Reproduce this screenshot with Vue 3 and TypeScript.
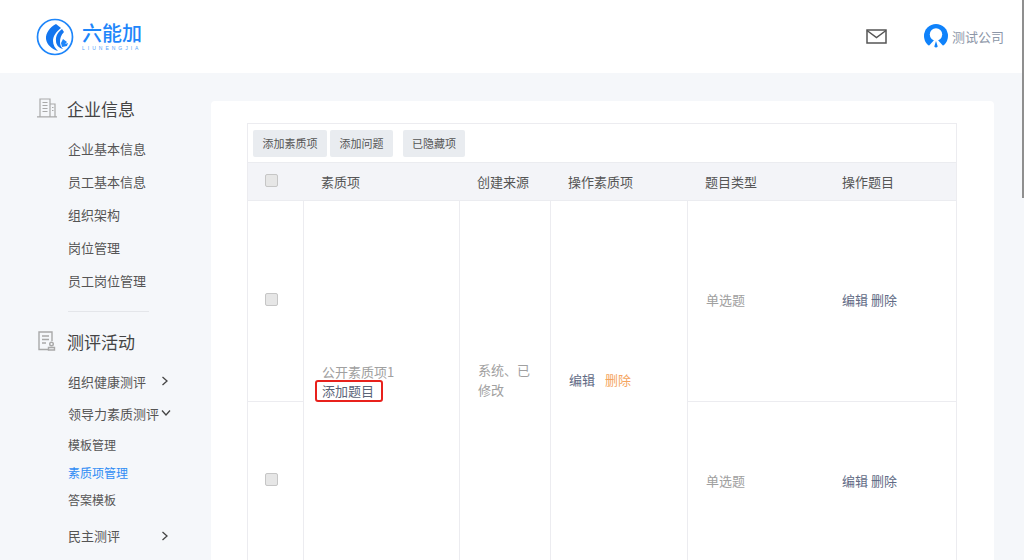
<script setup lang="ts">
const topItems: string[] = ['企业基本信息', '员工基本信息', '组织架构', '岗位管理', '员工岗位管理']
const rows = [
  { type: '单选题', tall: true },
  { type: '单选题', tall: false },
]
</script>

<template>
  <div class="page">
    <header class="top">
      <div class="logo">
        <svg class="mark" width="38" height="38" viewBox="0 0 38 38">
          <circle cx="19" cy="19" r="17.500" fill="#fff" stroke="#1e86fa" stroke-width="1.700" />
          <path d="M20 6 L25 10 C20 14 17 18 17 23 C17 27 19 30 22 33 C16 31 11 27 10 21 C9.500 15 14 9 20 6 Z" fill="#1476ef" />
          <path d="M26 11 L28 14 C25 17 24 20 24 24 C24 27 25 29 27 31 C23 30 20 27 20 23 C19.500 18 22 14 26 11 Z" fill="#1476ef" />
          <path d="M27 21 L31 24 L29 26 L32 25 L31 28 L26 29 L25 25 Z" fill="#1e86fa" />
        </svg>
        <div class="brand">
          <div class="brand-cn">六能加</div>
          <div class="brand-en">LIUNENGJIA</div>
        </div>
      </div>
      <div class="top-right">
        <svg class="mail" width="21" height="15" viewBox="0 0 21 15" fill="none" stroke="#555" stroke-width="1.500">
          <rect x="1" y="1" width="19" height="13" />
          <path d="M1 1.500 L10.500 8.500 L20 1.500" />
        </svg>
        <svg class="avatar" width="24" height="25" viewBox="0 0 24 25">
          <circle cx="12" cy="12" r="12" fill="#0f82fb" />
          <path d="M12 14 L2 25 H22 Z" fill="#fff" />
          <circle cx="12" cy="10.500" r="6.200" fill="#fff" />
          <path d="M12 17 L10.300 22.500 A1.900 1.900 0 0 0 13.700 22.500 Z" fill="#0f82fb" />
        </svg>
        <span class="company">测试公司</span>
      </div>
    </header>

    <div class="body">
      <aside class="side">
        <div class="group-title first">
          <svg width="22" height="20" viewBox="0 0 22 20" fill="none" stroke="#a9a9a9" stroke-width="1.200">
            <path d="M4 18.500 V1 H14 V18.500 M14 6 H19 V18.500 M1 18.800 H21" />
            <path d="M6.500 4.500 H11.500 M6.500 7.500 H11.500 M6.500 10.500 H11.500 M6.500 13.500 H11.500 M16 9.500 H17.500 M16 12.500 H17.500" />
          </svg>
          <span>企业信息</span>
        </div>
        <ul class="menu">
          <li v-for="item in topItems" :key="item">{{ item }}</li>
        </ul>
        <div class="divider"></div>
        <div class="group-title second">
          <svg width="22" height="20" viewBox="0 0 22 20" fill="none" stroke="#a9a9a9" stroke-width="1.400">
            <path d="M13 18.500 H3 V1 H16 V10" />
            <path d="M6 5 H13 M6 8.500 H13 M6 12 H10" />
            <circle cx="15.500" cy="13" r="1.800" />
            <path d="M12.500 19 V16.500 H18.500 V19 Z" />
          </svg>
          <span>测评活动</span>
        </div>
        <div class="sub first-sub">
          <span>组织健康测评</span>
          <svg class="arrow right" width="8" height="10" viewBox="0 0 8 10" fill="none" stroke="#444" stroke-width="1.300"><path d="M1.500 1 L6 5 L1.500 9" /></svg>
        </div>
        <div class="sub open">
          <span>领导力素质测评</span>
          <svg class="arrow down" width="10" height="8" viewBox="0 0 10 8" fill="none" stroke="#444" stroke-width="1.300"><path d="M1 1.500 L5 6 L9 1.500" /></svg>
        </div>
        <ul class="leaf">
          <li>模板管理</li>
          <li class="active">素质项管理</li>
          <li>答案模板</li>
        </ul>
        <div class="sub last-sub">
          <span>民主测评</span>
          <svg class="arrow right" width="8" height="10" viewBox="0 0 8 10" fill="none" stroke="#444" stroke-width="1.300"><path d="M1.500 1 L6 5 L1.500 9" /></svg>
        </div>
      </aside>

      <main class="card">
        <section class="table">
          <div class="toolbar">
            <button class="btn b1" type="button">添加素质项</button>
            <button class="btn b2" type="button">添加问题</button>
            <button class="btn b3" type="button">已隐藏项</button>
          </div>
          <div class="grid">
            <div class="th check-cell"><span class="box"></span></div>
            <div class="th">素质项</div>
            <div class="th">创建来源</div>
            <div class="th">操作素质项</div>
            <div class="th">题目类型</div>
            <div class="th">操作题目</div>

            <div class="td name">
              <div class="muted">公开素质项1</div>
              <div class="add-wrap"><span class="add">添加题目</span></div>
            </div>
            <div class="td source">系统、已<br />修改</div>
            <div class="td ops">
              <span class="link">编辑</span>
              <span class="danger">删除</span>
            </div>

            <template v-for="(row, i) in rows" :key="i">
              <div class="td check-cell" :class="row.tall ? 'r-a' : 'r-b'"><span class="box"></span></div>
              <div class="td type" :class="row.tall ? 'r-a' : 'r-b'">{{ row.type }}</div>
              <div class="td act" :class="row.tall ? 'r-a' : 'r-b'"><span class="link">编辑</span><span class="link">删除</span></div>
            </template>
          </div>
        </section>
      </main>
    </div>

    <div class="scroll-thumb"></div>
  </div>
</template>

<style>
html, body { margin: 0; overflow: hidden; }
</style>

<style scoped>
.page {
  position: relative;
  width: 1024px;
  height: 560px;
  overflow: hidden;
  background: #f5f7fa;
  font-family: "Noto Sans CJK SC", "Liberation Sans", sans-serif;
  color: #555;
}
.top {
  height: 73px;
  background: #fff;
  display: flex;
  justify-content: space-between;
  align-items: center;
}
.logo { display: flex; align-items: center; margin-left: 36px; }
.brand { margin-left: 8px; color: #1e86fa; }
.brand-cn { font-size: 20px; line-height: 22px; font-weight: 500; margin-top: 1px; }
.brand-en { font-family: "Liberation Sans", sans-serif; font-size: 5px; line-height: 7px; letter-spacing: 3px; margin-top: 1px; color: #4f9ffa; }
.top-right { display: flex; align-items: center; margin-right: 20px; }
.mail { margin-right: 37px; }
.avatar { margin-right: 4px; }
.company { font-size: 13px; color: #8d97a8; }

.body { display: flex; align-items: flex-start; }
.side { width: 211px; flex: none; padding-top: 24px; box-sizing: border-box; }
.group-title { display: flex; align-items: center; height: 22px; padding-left: 36px; font-size: 17px; color: #444; }
.group-title svg { margin-right: 9px; }
.group-title.second { margin-top: 18px; }
ul { list-style: none; margin: 0; padding: 0; }
.menu { margin-top: 13px; }
.menu li { height: 33px; line-height: 33px; padding-left: 68px; font-size: 13px; color: #555; }
.divider { height: 1px; background: #e4e6ea; width: 81px; margin: 14px 0 0 68px; }
.sub { display: flex; align-items: center; height: 20px; padding-left: 68px; font-size: 13px; color: #555; position: relative; }
.first-sub { margin-top: 19px; }
.open { margin-top: 12px; }
.last-sub { margin-top: 12px; }
.arrow.right { margin-left: auto; margin-right: 42px; }
.arrow.down { margin-left: 2px; }
.leaf { margin-top: 8px; }
.leaf li { height: 27.500px; line-height: 27.500px; padding-left: 68px; font-size: 12px; color: #555; }
.leaf li.active { color: #2f8cf5; }

.card {
  width: 783px;
  height: 520px;
  margin-top: 28px;
  background: #fff;
  border-radius: 4px;
  padding: 22px 37px 0 36px;
  box-sizing: border-box;
  flex: none;
}
.table { width: 710px; border: 1px solid #ececf0; border-bottom: 0; box-sizing: border-box; }
.toolbar { height: 38px; display: flex; align-items: center; padding-left: 5px; box-sizing: border-box; }
.btn {
  height: 27px;
  border: 0;
  border-radius: 2px;
  background: #e9ecf0;
  color: #555;
  font: inherit;
  font-size: 11px;
  padding: 0;
}
.b1 { width: 74px; }
.b2 { width: 63px; margin-left: 3px; }
.b3 { width: 62px; margin-left: 10px; }
.grid {
  display: grid;
  grid-template-columns: 55px 156px 91px 137px 137px 132px;
  grid-template-rows: 39px 201px 160px;
}
.th {
  background: #f3f4f8;
  border-top: 1px solid #ebecf0;
  border-bottom: 1px solid #ebecf0;
  font-size: 13px;
  color: #555;
  display: flex;
  align-items: center;
  padding-left: 18px;
  box-sizing: border-box;
}
.td {
  display: flex;
  align-items: center;
  padding-left: 18px;
  padding-bottom: 4px;
  box-sizing: border-box;
  font-size: 13px;
  color: #a0a0a0;
}
.check-cell .box {
  width: 11px;
  height: 11px;
  border: 1px solid #c6c6c6;
  border-radius: 2px;
  background: #e6e6e6;
}
.th.check-cell { padding-left: 0; padding-right: 8px; padding-bottom: 2px; justify-content: center; }
.td.check-cell { padding-left: 0; padding-right: 8px; padding-bottom: 3px; justify-content: center; grid-column: 1; }
.td.check-cell.r-b { padding-bottom: 5px; }
.r-a { grid-row: 2; border-bottom: 1px solid #ececf0; }
.r-b { grid-row: 3; }
.type { grid-column: 5; border-left: 1px solid #ececf0; }
.act { grid-column: 6; gap: 3px; }
.name, .source, .ops { grid-row: 2 / 4; border-left: 1px solid #ececf0; }
.name { grid-column: 2; flex-direction: column; align-items: flex-start; justify-content: center; padding-bottom: 0; }
.source { grid-column: 3; line-height: 20px; }
.ops { grid-column: 4; color: #555; gap: 10px; }
.muted { line-height: 18px; color: #a0a0a0; }
.add-wrap { position: relative; height: 20px; line-height: 20px; margin-top: 0; }
.add { color: #5a6478; }
.add::after {
  content: "";
  position: absolute;
  left: -7px;
  top: -1px;
  right: -9px;
  bottom: -1px;
  border: 2px solid #e8211c;
  border-radius: 3px;
}
.link { color: #616a85; }
.danger { color: #f5a560; }
.scroll-thumb { position: absolute; right: 0; top: 0; width: 2px; height: 198px; background: #8f8f8f; }
</style>
